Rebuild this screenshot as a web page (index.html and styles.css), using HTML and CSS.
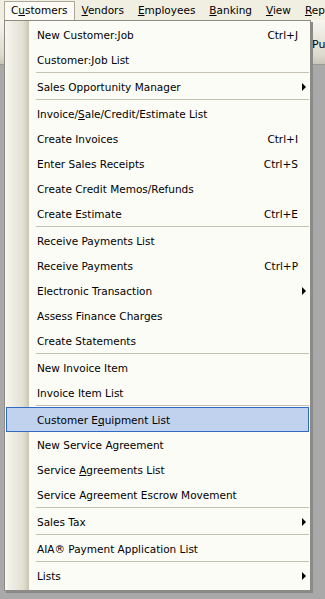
FILE: index.html
```html
<!DOCTYPE HTML>
<html>
<head>
<meta name="viewport" content="width=device-width, initial-scale=1">
<title>Customers menu</title>
<link rel="stylesheet" href="styles.css">
</head>
<body>
<div class="menubar">
  <span class="top open">C<u>u</u>stomers</span>
  <span class="top"><u>V</u>endors</span>
  <span class="top"><u>E</u>mployees</span>
  <span class="top"><u>B</u>anking</span>
  <span class="top"><u>V</u>iew</span>
  <span class="top"><u>R</u>ep</span>
</div>
<div class="toolbar"><span class="tool">Pu</span></div>

<div class="menu">
  <div class="item"><span>New Customer:Job</span><span class="key">Ctrl+J</span></div>
  <div class="item"><span>Customer:Job List</span></div>
  <div class="sep"></div>
  <div class="item sub"><span>Sales Opportunity Manager</span></div>
  <div class="sep"></div>
  <div class="item"><span>Invoice/<u>S</u>ale/Credit/Estimate List</span></div>
  <div class="item"><span>Create Invoices</span><span class="key">Ctrl+I</span></div>
  <div class="item"><span>Enter Sales Receipts</span><span class="key">Ctrl+S</span></div>
  <div class="item"><span>Create Credit Memos/Refunds</span></div>
  <div class="item"><span>Create Estimate</span><span class="key">Ctrl+E</span></div>
  <div class="sep"></div>
  <div class="item"><span>Receive Payments List</span></div>
  <div class="item"><span>Receive Payments</span><span class="key">Ctrl+P</span></div>
  <div class="item sub"><span>Electronic Transaction</span></div>
  <div class="item"><span>Assess Finance Charges</span></div>
  <div class="item"><span>Create Statements</span></div>
  <div class="sep"></div>
  <div class="item"><span>New Invoice Item</span></div>
  <div class="item"><span>Invoice Item List</span></div>
  <div class="sep"></div>
  <div class="item hover"><span>Customer E<u>q</u>uipment List</span></div>
  <div class="item"><span>New Service Agreement</span></div>
  <div class="item"><span>Service <u>A</u>greements List</span></div>
  <div class="item"><span>Service Agreement Escrow Movement</span></div>
  <div class="sep"></div>
  <div class="item sub"><span>Sales Tax</span></div>
  <div class="sep"></div>
  <div class="item"><span>AIA&reg; Payment Application List</span></div>
  <div class="sep"></div>
  <div class="item sub"><span>Lists</span></div>
</div>
</body>
</html>
```
FILE: styles.css
```css
body {
  margin: 0;
  background: #a9a9a9;
  font-family: Tahoma, "DejaVu Sans", sans-serif;
  font-size: 10.5px;
  color: #000;
  height: 599px;
  overflow: hidden;
}
.menubar {
  height: 20px;
  background: #f1efe2;
  display: flex;
  align-items: center;
  padding-left: 4px;
  white-space: nowrap;
  overflow: hidden;
}
.top {
  padding: 0 6px;
  height: 18px;
  line-height: 17px;
  border: 1px solid transparent;
  box-sizing: border-box;
}
.open {
  background: #fbfaf5;
  border-color: #aca899 #aca899 transparent #aca899;
  height: 20px;
  margin-top: 2px;
  line-height: 17px;
}
.toolbar {
  height: 44px;
  background: linear-gradient(#f6f5ee, #dcdacd 80%, #c9c6b8);
  border-bottom: 1px solid #9d9b90;
  overflow: hidden;
  white-space: nowrap;
}
.tool {
  display: block;
  margin-left: 312px;
  padding-top: 18px;
  font-size: 11px;
}
.menu {
  position: absolute;
  left: 4px;
  top: 20px;
  width: 305px;
  padding: 1px 0 2px 0;
  background: linear-gradient(to right, #f7f6f0, #e2e0d2 18px, #c9c6b0 24px, #fcfcf7 24px);
  border: 1px solid #8d8b82;
  box-shadow: 2px 2px 0 #8a8a8a;
}
.item {
  height: 25px;
  display: flex;
  align-items: center;
  justify-content: space-between;
  padding: 0 10px 0 30px;
  margin: 0 1px;
  box-sizing: border-box;
  border: 1px solid transparent;
  white-space: nowrap;
}
.sub::after {
  content: "";
  border-left: 4px solid #000;
  border-top: 4px solid transparent;
  border-bottom: 4px solid transparent;
  margin-right: -8px;
}
.hover {
  background: #c1d2ee;
  border-color: #316ac5;
}
.sep {
  height: 1px;
  margin: 0 1px 1px 31px;
  background: #c5c2b2;
}
```
